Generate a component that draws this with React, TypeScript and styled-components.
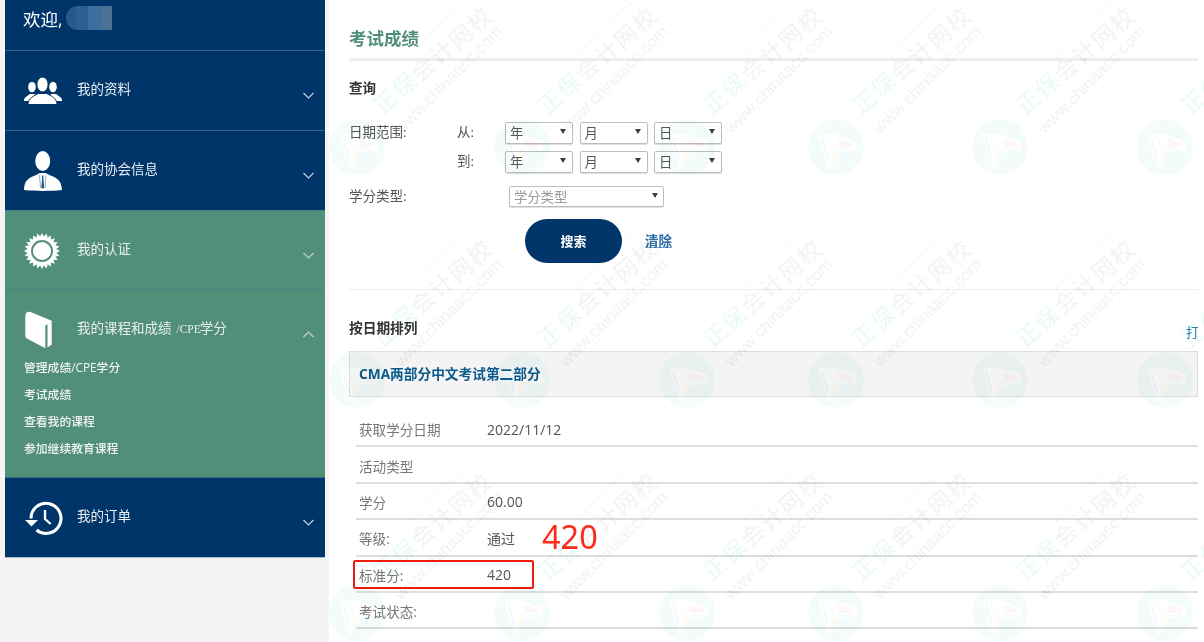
import React from "react"
import styled, { createGlobalStyle } from "styled-components"

const GlobalStyle = createGlobalStyle`
  html, body {
    margin: 0;
    padding: 0;
    width: 100%;
    height: 100%;
    overflow: hidden;
    background: #fff;
  }
  * { box-sizing: border-box; }
`

const SPage = styled.div`
  display: flex;
  width: 1204px;
  height: 642px;
  overflow: hidden;
  font-family: "Open Sans", "Noto Sans CJK SC", sans-serif;
`

const SAside = styled.aside`
  flex: 0 0 329px;
  height: 100%;
  padding: 0 4px 0 5px;
  background-color: #f4f4f4;
`

const SWelcome = styled.div`
  display: flex;
  align-items: flex-start;
  gap: 3px;
  height: 50px;
  padding: 6px 0 0 18px;
  background-color: #00356a;
  color: #fff;
  font-size: 17.5px;
  line-height: 26px;
`

const SBlurredName = styled.span`
  width: 46px;
  height: 24px;
  border-radius: 12px 0 0 12px;
  background: linear-gradient(
    to right,
    #2a5888 0 10px,
    #2d5f92 10px 22px,
    #3a6e9f 22px 35px,
    #4b7094 35px
  );
`

const SNavItem = styled.div<{ $active?: boolean; $last?: boolean }>`
  background-color: ${({ $active }) => ($active ? "#528f78" : "#00356a")};
  border-top: 1px solid ${({ $active }) => ($active ? "#4b7f88" : "#3b6389")};
  border-bottom: ${({ $last }) => ($last ? "1px solid #a9bdd0" : "none")};
`

const SNavHeader = styled.div<{ $open?: boolean }>`
  display: flex;
  align-items: flex-start;
  height: ${({ $open }) => ($open ? "63.5px" : "78.75px")};
  padding: 18px 11px 0 17px;
  color: #e8eef3;
`

const SNavIcon = styled.span`
  display: flex;
  align-items: center;
  flex: 0 0 55px;
  height: 44px;
`

const SNavLabel = styled.span`
  flex: 1;
  margin-top: 9px;
  font-family: "Noto Sans CJK SC", sans-serif;
  font-size: 13.5px;
  line-height: 20px;
`

const SNavLatin = styled.span`
  margin: 0 -1px 0 5px;
  font-family: "Liberation Serif", serif;
  font-size: 11.5px;
`

const SChevron = styled.svg`
  display: block;
  width: 11px;
  height: 7px;
  margin-top: 23px;
  fill: none;
  stroke: #c3d0da;
  stroke-width: 1.2;
`

const SSubList = styled.ul`
  margin: 0;
  padding: 0 0 15.25px 19px;
  list-style: none;
`

const SSubItem = styled.li`
  height: 27px;
  font-size: 11.8px;
  font-weight: 500;
  line-height: 26px;
  color: #f2f6f4;
`

const SMain = styled.main`
  position: relative;
  flex: 1;
  height: 100%;
  overflow: hidden;
  background-color: #fff;
`

const SContent = styled.div`
  width: 849px;
  margin-left: 20px;
  overflow: hidden;
`

const STitle = styled.h1`
  margin: 0;
  padding: 25px 0 7px;
  border-bottom: 3px solid #eeeeee;
  color: #4f8f78;
  font-size: 17.5px;
  font-weight: 700;
  line-height: 26px;
`

const SSectionHeading = styled.h2`
  margin: 17px 0 0;
  color: #333;
  font-size: 13.5px;
  font-weight: 700;
  line-height: 20px;
`

const SForm = styled.form`
  margin-top: 24px;
`

const SDateRow = styled.div`
  display: grid;
  grid-template-columns: 108px 48px 1fr;
  align-items: center;
  height: 22px;
  margin-bottom: 7px;
`

const SDateSelects = styled.div`
  display: flex;
  gap: 6.5px;
  height: 100%;
`

const SFieldLabel = styled.label`
  margin-top: -2px;
  color: #555;
  font-size: 13.5px;
  line-height: 20px;
`

const SCreditRow = styled.div`
  display: grid;
  grid-template-columns: 160px 155px;
  align-items: center;
  height: 21px;
  margin-top: 13px;
`

const SSelectWrap = styled.span<{ $wide?: boolean }>`
  position: relative;
  display: block;
  flex: 0 0 ${({ $wide }) => ($wide ? "155px" : "68px")};
  height: 100%;

  &::after {
    content: "";
    position: absolute;
    top: 7px;
    right: ${({ $wide }) => ($wide ? "6px" : "7px")};
    border-left: 3.5px solid transparent;
    border-right: 3.5px solid transparent;
    border-top: 5px solid #3d3d3d;
    pointer-events: none;
  }
`

const SSelect = styled.select<{ $muted?: boolean }>`
  display: block;
  width: 100%;
  height: 100%;
  padding: 0 0 0 4px;
  border: 1px solid #bdbdbd;
  border-radius: 2px;
  background: #fff;
  box-shadow: 0 1px 1px #ddd;
  appearance: none;
  color: ${({ $muted }) => ($muted ? "#9a9a9a" : "#555")};
  font-family: inherit;
  font-size: 13.3px;
  outline: none;
`

const SActions = styled.div`
  display: flex;
  align-items: center;
  gap: 23px;
  margin-top: 12px;
  padding-left: 176px;
`

const SSearchButton = styled.button`
  width: 97px;
  height: 44px;
  padding: 0 0 2px;
  border: none;
  border-radius: 22px;
  background-color: #00366a;
  color: #fff;
  font-family: inherit;
  font-size: 13px;
  font-weight: 700;
`

const SClearLink = styled.a`
  margin-top: -2px;
  color: #2c6aa3;
  font-size: 13.5px;
  font-weight: 700;
  text-decoration: underline;
  text-decoration-color: #7ba3c8;
  text-underline-offset: 1px;
`

const SDivider = styled.hr`
  height: 1px;
  margin: 26px 0 0;
  border: none;
  background-color: #eeeeee;
`

const SSortRow = styled.div`
  display: flex;
  align-items: center;
  justify-content: space-between;
  height: 20px;
  margin-top: 28px;
`

const SSortHeading = styled.h3`
  margin: 0;
  color: #333;
  font-size: 13.7px;
  font-weight: 700;
  line-height: 20px;
`

const SPrintLink = styled.a`
  margin: 6px -14px 0 0;
  color: #2a7fb0;
  font-size: 13px;
  white-space: nowrap;
`

const SExamBand = styled.div`
  display: flex;
  align-items: center;
  height: 46px;
  margin-top: 13px;
  padding: 0 0 2px 9px;
  border: 1px solid #dddddd;
  background-color: #f4f4f4;
  color: #0b5a8c;
  font-size: 13.7px;
  font-weight: 700;
`

const SDetailList = styled.div`
  margin: 14px 0 0 7px;
`

const SDetailRow = styled.div`
  position: relative;
  display: flex;
  align-items: center;
  height: 36.4px;
  padding: 2px 0 0 3px;
  border-bottom: 2px solid #dedede;
  font-size: 13.6px;
`

const SDetailLabel = styled.span`
  flex: 0 0 128px;
  color: #777;
`

const SDetailValue = styled.span`
  color: #555;
  font-size: 14px;
`

const SAnnotation = styled.span`
  position: absolute;
  top: -5px;
  left: 186px;
  color: #ff2a1a;
  font-family: "Noto Sans", sans-serif;
  font-size: 32.5px;
  line-height: 44px;
`

const SHighlightBox = styled.span`
  position: absolute;
  top: 3px;
  left: -3px;
  width: 181px;
  height: 29px;
  border: 2px solid #f01c10;
  border-radius: 2px;
  pointer-events: none;
`

const SWatermark = styled.div`
  position: absolute;
  inset: 0;
  mix-blend-mode: multiply;
  pointer-events: none;
`

const STile = styled.div.attrs<{ $x: number; $y: number }>(({ $x, $y }) => ({
  style: { left: $x, top: $y },
}))<{ $x: number; $y: number }>`
  position: absolute;
  width: 0;
  height: 0;
`

const SBadge = styled.svg`
  position: absolute;
  top: -150px;
  left: -30px;
  width: 150px;
  height: 180px;
  overflow: visible;
`

const SBrandText = styled.span`
  position: absolute;
  top: -88px;
  left: 75px;
  transform: translate(-50%, -50%) rotate(-41deg);
  color: rgba(105, 105, 105, 0.07);
  font-family: "Noto Sans CJK SC", sans-serif;
  font-size: 23px;
  font-weight: 500;
  letter-spacing: 2px;
  white-space: nowrap;
`

const SBrandTint = styled.span`
  color: rgba(90, 215, 195, 0.11);
`

const SBrandUrl = styled.span`
  position: absolute;
  top: -67px;
  left: 92px;
  transform: translate(-50%, -50%) rotate(-45deg);
  color: rgba(90, 90, 90, 0.08);
  font-family: "Liberation Sans", sans-serif;
  font-size: 17px;
  white-space: nowrap;
`

const Chevron = ({ up }: { up?: boolean }) => (
  <SChevron viewBox="0 0 11 7">
    <path d={up ? "M.5 6 5.5 1l5 5" : "M.5 1l5 5 5-5"} />
  </SChevron>
)

const PeopleIcon = () => (
  <svg width="42" height="34" viewBox="0 0 42 34">
    <g fill="#fff">
      <ellipse cx="10" cy="13" rx="3.800" ry="5.200" />
      <path d="M2 26c0-2.500 4-4.500 6-6h4l5 2-6 4-2 1H2z" />
      <ellipse cx="31" cy="13" rx="3.800" ry="5.200" />
      <path d="M40 26c0-2.500-4-4.500-6-6h-4l-5 2 6 4 2 1h7z" />
    </g>
    <g fill="#fff" stroke="#00356a" strokeWidth="1">
      <ellipse cx="20.500" cy="10.500" rx="5.600" ry="7.400" />
      <path d="M6 30.500c0-6 6-9 10.500-11h8c4.500 2 10.500 5 10.500 11z" />
    </g>
  </svg>
)

const ManIcon = () => (
  <svg width="42" height="44" viewBox="0 0 42 44">
    <ellipse cx="20.700" cy="12" rx="7.500" ry="10" fill="#fff" />
    <path
      fill="#fff"
      d="M2 41c0-9 4-12 12-15l4-2h5.500l4 2c8 3 12 6 12.500 15-12 1.200-26 1.200-38 0z"
    />
    <path fill="#2c5a87" d="M20 26.500h1.500l-.1 3 .9 9-1.500 1.500-1.500-1.500.8-9z" />
    <path stroke="#6d8cab" strokeWidth=".7" fill="none" d="M17.500 26l1 13M24 26l-1 13" />
  </svg>
)

const gearPoints = Array.from({ length: 48 }, (_, i) => {
  const r = i % 2 === 0 ? 18 : 14.5
  const a = (i / 48) * Math.PI * 2
  return `${(20 + r * Math.cos(a)).toFixed(2)},${(20 + r * Math.sin(a)).toFixed(2)}`
}).join(" ")

const GearIcon = () => (
  <svg width="40" height="40" viewBox="0 0 40 40">
    <polygon points={gearPoints} fill="#fff" />
    <circle cx="20" cy="20" r="10" fill="#fff" stroke="#528f78" strokeWidth="2" />
  </svg>
)

const BookIcon = () => (
  <svg width="32" height="44" viewBox="0 0 32 44">
    <path
      fill="#fff"
      d="M3.300 8C3.300 5 5 3.500 8 3.700L29.700 12.800V15L23.300 17.500V40.300L5 30.500C3.800 29.800 3.300 29 3.300 28z"
    />
    <path fill="#fff" d="M25.500 16.500 29.700 15V36.500L25.500 39.500z" />
  </svg>
)

const HistoryIcon = () => (
  <svg width="42" height="38" viewBox="0 0 42 38">
    <path
      fill="none"
      stroke="#fff"
      strokeWidth="3"
      d="M9 19.500A15 15 0 1 1 14.500 31"
    />
    <path fill="#fff" d="M3 21h13l-6.500 6.500z" />
    <path fill="none" stroke="#fff" strokeWidth="2.300" d="M23 11v9l5.700 5" />
  </svg>
)

const navItems = [
  { label: "我的资料", icon: <PeopleIcon /> },
  { label: "我的协会信息", icon: <ManIcon /> },
  { label: "我的认证", icon: <GearIcon />, active: true },
  {
    label: (
      <>
        我的课程和成绩<SNavLatin>/CPE</SNavLatin>学分
      </>
    ),
    icon: <BookIcon />,
    active: true,
    children: ["管理成绩/CPE学分", "考试成绩", "查看我的课程", "参加继续教育课程"],
  },
  { label: "我的订单", icon: <HistoryIcon />, last: true },
]

const details = [
  { label: "获取学分日期", value: "2022/11/12" },
  { label: "活动类型", value: "" },
  { label: "学分", value: "60.00" },
  { label: "等级:", value: "通过", note: "420" },
  { label: "标准分:", value: "420", boxed: true },
  { label: "考试状态:", value: "" },
]

// watermark anchors are the badge centres, relative to the main column
// the picture has a seam between the 3rd and 4th column
const tileColumns = [28, 193, 358, 507, 671, 836]
const tileRows = [147, 380, 613]

const Badge = () => (
  <SBadge viewBox="-30 -150 150 180">
    <circle cx="0" cy="0" r="28" fill="rgba(70, 200, 185, 0.06)" />
    <path d="M-17-12-2-13 20-6 21 3 3 5-7 22-15-3z" fill="#fff" />
    <path d="M2-8 17-4 17 0 3 0z" fill="rgba(250, 205, 190, 0.16)" />
    <path d="M-3 4 2 5-5 16z" fill="rgba(250, 235, 170, 0.2)" />
    <path d="M-14-9-8 12" stroke="rgba(90, 190, 215, 0.12)" strokeWidth="1.500" fill="none" />
    <path d="M-9-10-1 3 16 2" stroke="rgba(70, 200, 185, 0.08)" strokeWidth="1" fill="none" />
    <path
      d="M56-90C70-112 90-132 110-144"
      stroke="rgba(90, 215, 195, 0.12)"
      strokeWidth="1"
      fill="none"
    />
  </SBadge>
)

const Watermark = () => (
  <SWatermark>
    {tileRows.flatMap((y) =>
      tileColumns.map((x) => (
        <STile key={`${x}-${y}`} $x={x} $y={y}>
          <Badge />
          <SBrandText>
            <SBrandTint>正保</SBrandTint>会计网校
          </SBrandText>
          <SBrandUrl>www.chinaacc.com</SBrandUrl>
        </STile>
      ))
    )}
  </SWatermark>
)

const SmallSelect = ({ text }: { text: string }) => (
  <SSelectWrap>
    <SSelect defaultValue={text}>
      <option>{text}</option>
    </SSelect>
  </SSelectWrap>
)

const DateRow = ({ label, side }: { label?: string; side: string }) => (
  <SDateRow>
    <SFieldLabel>{label}</SFieldLabel>
    <SFieldLabel>{side}</SFieldLabel>
    <SDateSelects>
      <SmallSelect text="年" />
      <SmallSelect text="月" />
      <SmallSelect text="日" />
    </SDateSelects>
  </SDateRow>
)

const App = () => {
  return (
    <SPage>
      <GlobalStyle />
      <SAside>
        <SWelcome>
          欢迎,
          <SBlurredName />
        </SWelcome>
        {navItems.map((item, index) => (
          <SNavItem key={index} $active={item.active} $last={item.last}>
            <SNavHeader $open={!!item.children}>
              <SNavIcon>{item.icon}</SNavIcon>
              <SNavLabel>{item.label}</SNavLabel>
              <Chevron up={!!item.children} />
            </SNavHeader>
            {item.children && (
              <SSubList>
                {item.children.map((child) => (
                  <SSubItem key={child}>{child}</SSubItem>
                ))}
              </SSubList>
            )}
          </SNavItem>
        ))}
      </SAside>

      <SMain>
        <SContent>
          <STitle>考试成绩</STitle>
          <SSectionHeading>查询</SSectionHeading>
          <SForm>
            <DateRow label="日期范围:" side="从:" />
            <DateRow side="到:" />
            <SCreditRow>
              <SFieldLabel>学分类型:</SFieldLabel>
              <SSelectWrap $wide>
                <SSelect $muted defaultValue="学分类型">
                  <option>学分类型</option>
                </SSelect>
              </SSelectWrap>
            </SCreditRow>
            <SActions>
              <SSearchButton type="button">搜索</SSearchButton>
              <SClearLink>清除</SClearLink>
            </SActions>
          </SForm>
          <SDivider />
          <SSortRow>
            <SSortHeading>按日期排列</SSortHeading>
            <SPrintLink>打印</SPrintLink>
          </SSortRow>
          <SExamBand>CMA两部分中文考试第二部分</SExamBand>
          <SDetailList>
            {details.map((row) => (
              <SDetailRow key={row.label}>
                <SDetailLabel>{row.label}</SDetailLabel>
                <SDetailValue>{row.value}</SDetailValue>
                {row.note && <SAnnotation>{row.note}</SAnnotation>}
                {row.boxed && <SHighlightBox />}
              </SDetailRow>
            ))}
          </SDetailList>
        </SContent>
        <Watermark />
      </SMain>
    </SPage>
  )
}

export default App
